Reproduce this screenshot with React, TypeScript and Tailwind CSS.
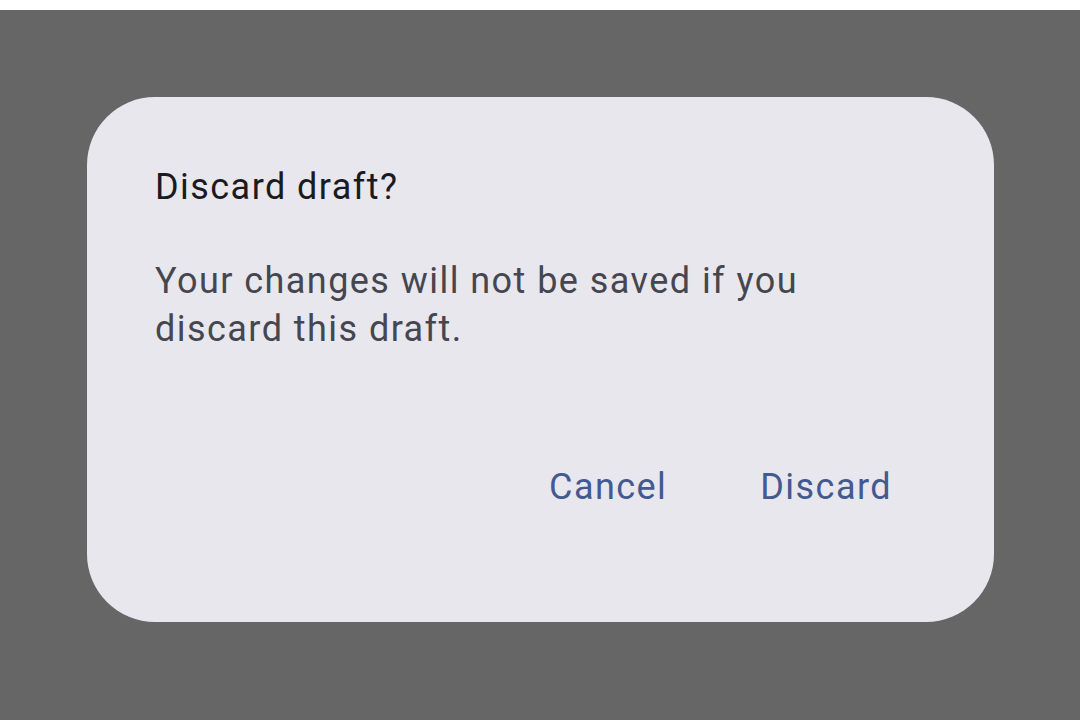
export default function App() {
  return (
    <div
      className="w-[1080px] h-[720px] bg-white pt-[10px] flex flex-col"
      style={{ fontFamily: "Roboto, 'Noto Sans', sans-serif" }}
    >
      <div className="flex-1 bg-[#666666] pt-[87px] pl-[87px]">
        {/* Dialog */}
        <div className="w-[907px] h-[525px] rounded-[68px] bg-[#e8e7ee] pl-[68px] pr-[102px] pt-[66px] flex flex-col tracking-[1.45px]">
          <h2 className="text-[36px] leading-[48px] text-[#1b1b1f] font-normal">
            Discard draft?
          </h2>
          <p className="mt-[46px] text-[36px] leading-[48px] text-[#45464f] w-[700px]">
            Your changes will not be saved if you discard this draft.
          </p>
          <div className="mt-[110px] flex justify-end gap-[93px]">
            <button className="text-[36px] leading-[48px] text-[#44598f]">Cancel</button>
            <button className="text-[36px] leading-[48px] text-[#44598f]">Discard</button>
          </div>
        </div>
      </div>
    </div>
  );
}
